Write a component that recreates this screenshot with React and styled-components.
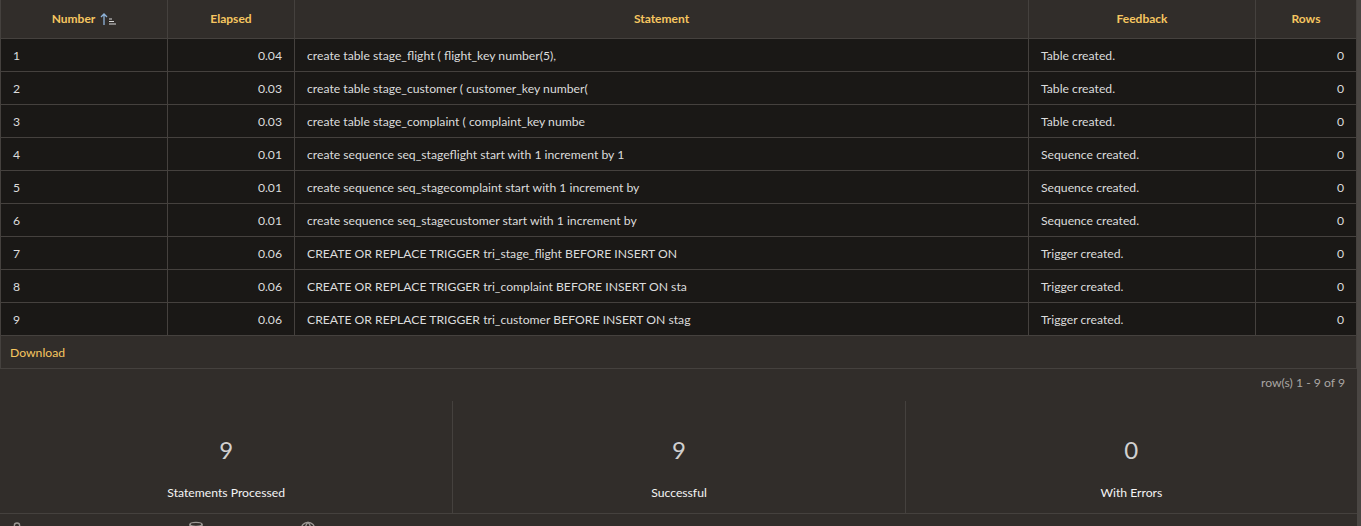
import React from "react";
import styled, { createGlobalStyle } from "styled-components";
import { User, Database, Globe } from "lucide-react";

const Global = createGlobalStyle`
  html, body { margin: 0; padding: 0; background: #312d2a; }
  body { font-family: Lato, "Noto Sans", "Liberation Sans", sans-serif; font-size: 12px; color: #dcdcdc; overflow: hidden; }
`;

const Page = styled.div`
  display: flex;
  width: 1361px;
  height: 526px;
  background: #312d2a;
  overflow: hidden;
`;

const Main = styled.div`
  flex: 1;
  display: flex;
  flex-direction: column;
  min-width: 0;
  & > * { flex-shrink: 0; }
`;

const Scrollbar = styled.div`
  width: 4px;
  background: #4a4643;
`;

const Table = styled.table`
  border-collapse: collapse;
  width: 100%;
  table-layout: fixed;
  border-left: 1px solid #45413e;
  border-right: 1px solid #45413e;
`;

const Th = styled.th`
  height: 36px;
  padding: 0 12px 2px;
  background: #312d2a;
  color: #f6c660;
  font-weight: 700;
  font-size: 12px;
  text-align: center;
  border: 1px solid #45413e;
  border-top: none;
  white-space: nowrap;
`;

const Td = styled.td`
  height: 32px;
  padding: 0 12px;
  background: #1a1816;
  color: #dcdcdc;
  font-size: 12.2px;
  border: 1px solid #45413e;
  text-align: ${(p) => (p.$right ? "right" : "left")};
  white-space: nowrap;
  overflow: hidden;
`;

const SortIcon = styled.svg`
  vertical-align: -3px;
  margin-left: 5px;
`;

const DownloadBar = styled.div`
  height: 32px;
  display: flex;
  align-items: center;
  padding: 0 9px;
  border-left: 1px solid #45413e;
  border-right: 1px solid #45413e;
  border-bottom: 1px solid #45413e;
`;

const Link = styled.a`
  color: #f6c660;
  font-size: 12.2px;
  text-decoration: none;
  cursor: pointer;
`;

const Pager = styled.div`
  height: 26px;
  display: flex;
  align-items: center;
  justify-content: flex-end;
  padding-right: 12px;
  color: #a9a6a3;
  font-size: 12.2px;
`;

const Summary = styled.div`
  display: grid;
  grid-template-columns: repeat(3, 1fr);
  padding-top: 6px;
  border-bottom: 1px solid #45413e;
`;

const Stat = styled.div`
  height: 112px;
  display: flex;
  flex-direction: column;
  align-items: center;
  border-left: ${(p) => (p.$first ? "none" : "1px solid #45413e")};
`;

const StatValue = styled.div`
  margin-top: 35px;
  font-size: 24px;
  line-height: 28px;
  color: #d0d0d0;
  font-weight: 400;
`;

const StatLabel = styled.div`
  margin-top: 21px;
  font-size: 12.2px;
  line-height: 15px;
  color: #f4f4f4;
`;

const Footer = styled.div`
  display: flex;
  height: 20px;
  align-items: flex-start;
  padding-top: 7px;
  color: #9c9894;
`;

const FooterIcon = styled.span`
  display: inline-flex;
  margin-left: ${(p) => p.$ml}px;
`;

const rows = [
  [1, "0.04", "create table stage_flight ( flight_key number(5),", "Table created.", 0],
  [2, "0.03", "create table stage_customer ( customer_key number(", "Table created.", 0],
  [3, "0.03", "create table stage_complaint ( complaint_key numbe", "Table created.", 0],
  [4, "0.01", "create sequence seq_stageflight start with 1 increment by 1", "Sequence created.", 0],
  [5, "0.01", "create sequence seq_stagecomplaint start with 1 increment by", "Sequence created.", 0],
  [6, "0.01", "create sequence seq_stagecustomer start with 1 increment by", "Sequence created.", 0],
  [7, "0.06", "CREATE OR REPLACE TRIGGER tri_stage_flight BEFORE INSERT ON", "Trigger created.", 0],
  [8, "0.06", "CREATE OR REPLACE TRIGGER tri_complaint BEFORE INSERT ON sta", "Trigger created.", 0],
  [9, "0.06", "CREATE OR REPLACE TRIGGER tri_customer BEFORE INSERT ON stag", "Trigger created.", 0],
];

export default function App() {
  return (
    <>
      <Global />
      <Page>
        <Main>
          <Table>
            <colgroup>
              <col style={{ width: 167 }} />
              <col style={{ width: 127 }} />
              <col style={{ width: 734 }} />
              <col style={{ width: 227 }} />
              <col />
            </colgroup>
            <thead>
              <tr>
                <Th>
                  Number
                  <SortIcon width="16" height="14" viewBox="0 0 16 14">
                    <path d="M4 13V2M1 5l3-3 3 3" stroke="#8fb3d9" strokeWidth="1.3" fill="none" />
                    <path d="M9 7h3M9 9.5h5M9 12h7" stroke="#d8d8d8" strokeWidth="1" fill="none" />
                  </SortIcon>
                </Th>
                <Th>Elapsed</Th>
                <Th>Statement</Th>
                <Th>Feedback</Th>
                <Th>Rows</Th>
              </tr>
            </thead>
            <tbody>
              {rows.map((r) => (
                <tr key={r[0]}>
                  <Td>{r[0]}</Td>
                  <Td $right>{r[1]}</Td>
                  <Td>{r[2]}</Td>
                  <Td>{r[3]}</Td>
                  <Td $right>{r[4]}</Td>
                </tr>
              ))}
            </tbody>
          </Table>
          <DownloadBar>
            <Link>Download</Link>
          </DownloadBar>
          <Pager>row(s) 1 - 9 of 9</Pager>
          <Summary>
            <Stat $first>
              <StatValue>9</StatValue>
              <StatLabel>Statements Processed</StatLabel>
            </Stat>
            <Stat>
              <StatValue>9</StatValue>
              <StatLabel>Successful</StatLabel>
            </Stat>
            <Stat>
              <StatValue>0</StatValue>
              <StatLabel>With Errors</StatLabel>
            </Stat>
          </Summary>
          <Footer>
            <FooterIcon $ml={9}><User size={16} /></FooterIcon>
            <FooterIcon $ml={163}><Database size={16} /></FooterIcon>
            <FooterIcon $ml={96}><Globe size={16} /></FooterIcon>
          </Footer>
        </Main>
        <Scrollbar />
      </Page>
    </>
  );
}
